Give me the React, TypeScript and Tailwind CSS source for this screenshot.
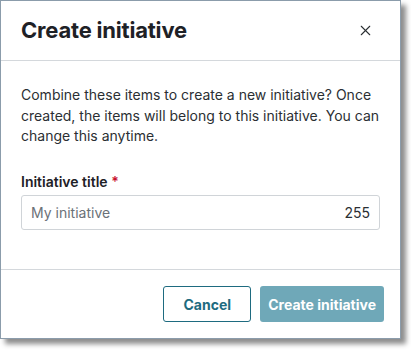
import React from "react";
import { X } from "lucide-react";

export default function App() {
  return (
    <div className="h-[350px] w-[411px] bg-white font-['Inter',sans-serif]">
      <div className="flex h-[339px] w-[401px] flex-col border border-[#8b9cab] bg-white shadow-[5px_5px_5px_rgba(0,0,0,0.45)]">
        {/* header */}
        <div className="flex h-[60px] shrink-0 items-center justify-between border-b border-[#d4d8dc] pl-5 pr-[26px]">
          <h1 className="text-[22px] font-bold tracking-[-0.2px] text-[#1e2126]">Create initiative</h1>
          <X size={17} strokeWidth={1.5} className="text-[#2b2f33]" />
        </div>

        {/* body */}
        <div className="flex-1 px-5 pt-[24px]">
          <p className="text-[14px] leading-[20.5px] text-[#2b2f33]">
            Combine these items to create a new initiative? Once created, the items will belong to this initiative. You can change this anytime.
          </p>
          <div className="mt-[24px] text-[14px] font-semibold text-[#1e2126]">
            Initiative title <span className="text-[#c8102e]">*</span>
          </div>
          <div className="mt-[3px] flex h-[35px] items-center justify-between rounded-[3px] border border-[#d0d4d8] px-[9px] text-[14px]">
            <span className="text-[#6b7178]">My initiative</span>
            <span className="text-[#2b2f33]">255</span>
          </div>
        </div>

        {/* footer */}
        <div className="flex h-[69px] shrink-0 items-center justify-end gap-[9px] border-t border-[#d4d8dc] pr-[16px]">
          <button className="h-[36px] w-[88px] rounded-[3px] border border-[#1e6b80] text-[14px] font-bold text-[#1e6b80]">
            Cancel
          </button>
          <button className="h-[36px] rounded-[3px] bg-[#6fa8b8] px-[8px] text-[14px] font-bold text-white">
            Create initiative
          </button>
        </div>
      </div>
    </div>
  );
}
